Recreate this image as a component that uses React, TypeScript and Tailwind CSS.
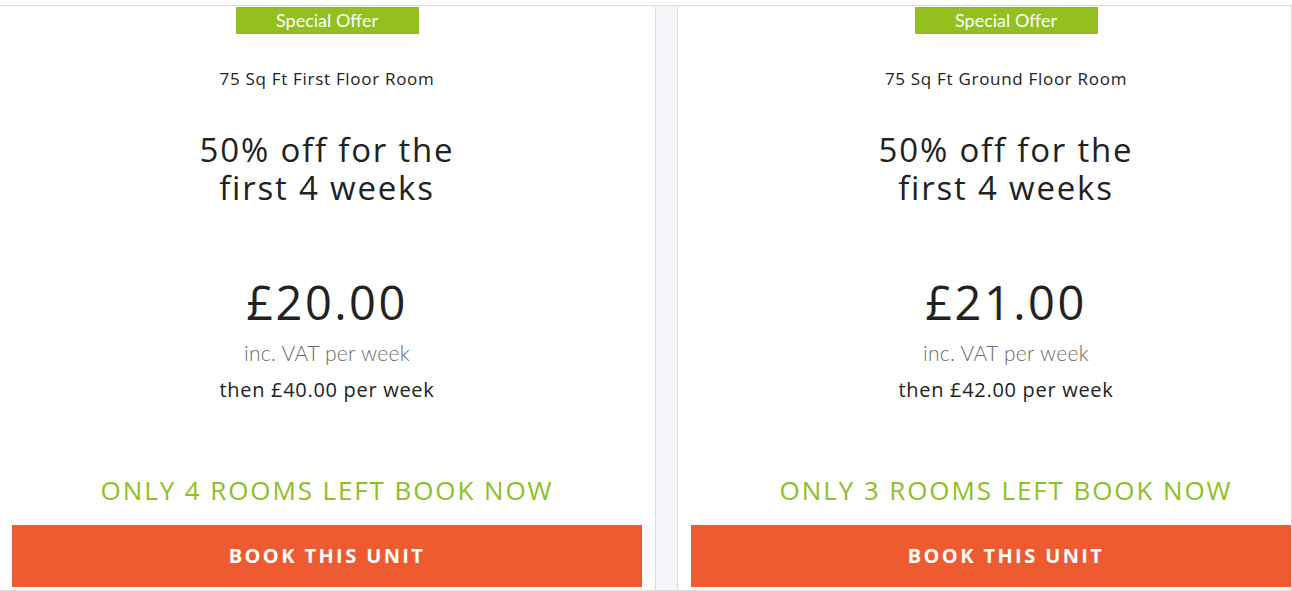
const offers = [
  { title: '75 Sq Ft First Floor Room', price: '£20.00', then: '£40.00', left: 4 },
  { title: '75 Sq Ft Ground Floor Room', price: '£21.00', then: '£42.00', left: 3 },
];

function OfferCard({ title, price, then, left }: (typeof offers)[number]) {
  return (
    <div className="w-[658px] shrink-0 bg-white border-x border-[#dcdcdc] rounded-t-[4px] flex flex-col items-center px-[13px]">
      {/* badge */}
      <div className="mt-[1px] w-[183px] h-[27px] bg-[#93c01f] text-white text-[18px] leading-[27px] text-center font-['Lato',sans-serif]">
        Special Offer
      </div>
      <div className="mt-[33px] h-[24px] text-[17px] leading-[24px] text-[#222] tracking-[0.7px]">{title}</div>
      <div className="mt-[40px] h-[76px] flex flex-col items-center text-[33px] leading-[38px] text-[#222] tracking-[1.8px]">
        <span>50% off for the</span>
        <span>first 4 weeks</span>
      </div>
      <div className="mt-[69px] text-[47px] leading-[52px] text-[#222] tracking-[2.5px]">{price}</div>
      <div className="mt-[12px] h-[26px] text-[21px] leading-[26px] text-[#6b6b6b] font-light font-['Lato',sans-serif] tracking-[0.3px]">
        inc. VAT per week
      </div>
      <div className="mt-[11px] h-[26px] text-[20px] leading-[26px] text-[#222] tracking-[0.7px]">then {then} per week</div>
      <div className="mt-[71px] h-[32px] text-[26px] leading-[32px] text-[#8cc025] tracking-[1.9px]">
        ONLY {left} ROOMS LEFT BOOK NOW
      </div>
      <button className="mt-[19px] w-full h-[62px] bg-[#ef5b30] text-white text-[20px] font-bold tracking-[2.4px]">
        BOOK THIS UNIT
      </button>
    </div>
  );
}

export default function App() {
  return (
    <div className="h-[591px] w-full overflow-hidden bg-white pt-[5px] font-['Open_Sans',sans-serif]">
      <div className="h-[586px] border-t border-r border-b border-[#dcdcdc] bg-[#f5f6fa] flex gap-[21px] -ml-[2px] overflow-hidden">
        {offers.map((o) => (
          <OfferCard key={o.title} {...o} />
        ))}
      </div>
    </div>
  );
}
